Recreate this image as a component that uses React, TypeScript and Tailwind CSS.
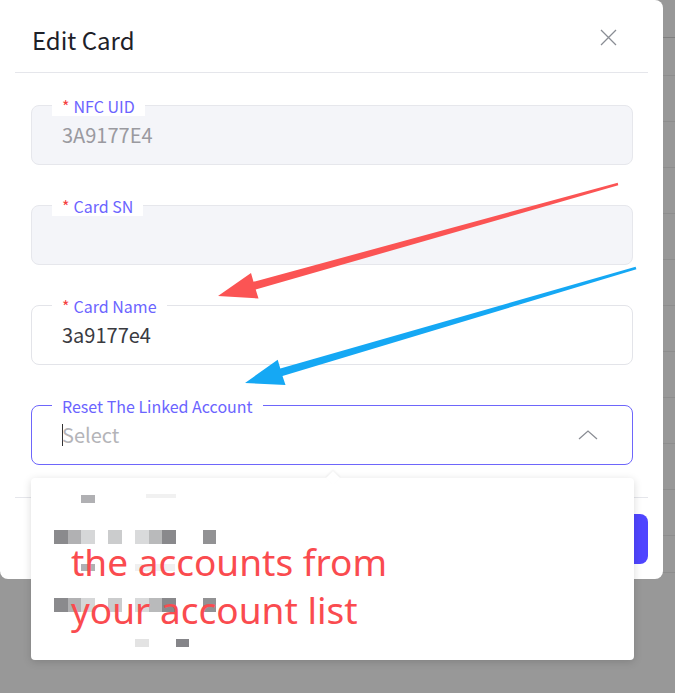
import React from 'react';

const font = { fontFamily: '"Noto Sans CJK SC", "Noto Sans", sans-serif' };

interface FieldProps {
    label: string;
    required?: boolean;
    value?: string;
    placeholder?: string;
    disabled?: boolean;
    active?: boolean;
}

const Field: React.FC<FieldProps> = ({ label, required, value, placeholder, disabled, active }) => {
    const box = disabled
        ? 'bg-[#f4f5f9] border-[#e6e7ec]'
        : active
            ? 'bg-white border-[#6e66fb]'
            : 'bg-white border-[#e3e4e9]';
    return (
        <div className={`relative h-[60px] rounded-lg border ${box} flex items-center pl-[30px] pr-[34px]`}>
            <span className="absolute -top-[10px] left-[20px] bg-white px-[10px] text-[16px] leading-[20px] text-[#6b64ff]">
                {required && <span className="text-[#f53f3f] mr-[4px]">*</span>}
                {label}
            </span>
            {value !== undefined && (
                <span className={`text-[20px] leading-[26px] ${disabled ? 'text-[#9a9aa0]' : 'text-[#3a3a3f]'}`}>{value}</span>
            )}
            {placeholder && (
                <div className="flex-1 flex items-center justify-between">
                    <span className="flex items-center text-[20px] leading-[26px] text-[#b4b4b8]">
                        <span className="w-px h-[22px] bg-[#333] -mr-px" />
                        {placeholder}
                    </span>
                    <svg width="20" height="12" viewBox="0 0 20 12" fill="none" stroke="#8a8d94" strokeWidth="1.3">
                        <path d="M1 10L10 2L19 10" />
                    </svg>
                </div>
            )}
        </div>
    );
};

const rows = [38, 38, 46, 46, 46, 46, 46, 46, 46, 46, 46, 46, 37];

const blocks: { x: number; y: number; w: number; h: number; c: string }[] = [
    { x: 50, y: 17, w: 14, h: 8, c: '#b0b0b3' },
    { x: 115, y: 16, w: 30, h: 4, c: '#f1f1f1' },
    { x: 23, y: 52, w: 14, h: 14, c: '#8a8a8d' },
    { x: 37, y: 52, w: 13, h: 14, c: '#b1b1b3' },
    { x: 50, y: 52, w: 14, h: 14, c: '#d6d7d8' },
    { x: 77, y: 52, w: 14, h: 14, c: '#cbcccd' },
    { x: 104, y: 52, w: 14, h: 14, c: '#d9dadb' },
    { x: 118, y: 52, w: 13, h: 14, c: '#b9babb' },
    { x: 131, y: 52, w: 14, h: 14, c: '#89898c' },
    { x: 172, y: 52, w: 13, h: 14, c: '#929294' },
    { x: 50, y: 86, w: 14, h: 7, c: '#b0b0b3' },
    { x: 104, y: 86, w: 40, h: 7, c: '#f0f0f0' },
    { x: 23, y: 120, w: 14, h: 14, c: '#8a8a8d' },
    { x: 37, y: 120, w: 13, h: 14, c: '#b1b1b3' },
    { x: 50, y: 120, w: 14, h: 14, c: '#d6d7d8' },
    { x: 77, y: 120, w: 14, h: 14, c: '#cbcccd' },
    { x: 104, y: 120, w: 14, h: 14, c: '#d9dadb' },
    { x: 118, y: 120, w: 13, h: 14, c: '#b9babb' },
    { x: 131, y: 120, w: 14, h: 14, c: '#89898c' },
    { x: 172, y: 120, w: 13, h: 14, c: '#929294' },
    { x: 104, y: 161, w: 14, h: 8, c: '#e3e3e3' },
    { x: 145, y: 161, w: 13, h: 8, c: '#858589' },
];

export default function App() {
    return (
        <div className="relative w-[675px] h-[693px] overflow-hidden bg-[#989898]" style={font}>
            {/* page behind the overlay */}
            <div className="flex flex-col">
                {rows.map((h, i) => (
                    <div
                        key={i}
                        className={`border-b ${i === 0 ? 'border-[#7f7f7f]' : 'border-[#8d8d8d]'}`}
                        style={{ height: h }}
                    />
                ))}
            </div>

            {/* modal */}
            <div className="absolute left-0 top-0 w-[663px] h-[579px] bg-white rounded-tr-lg rounded-b-lg flex flex-col">
                <div className="h-[72px] flex items-center justify-between pl-[32px] pr-[46px]">
                    <h2 className="text-[24px] leading-[30px] text-[#1d2129] font-normal mt-[8px]">Edit Card</h2>
                    <svg width="17" height="17" viewBox="0 0 17 17" stroke="#8a8d94" strokeWidth="1.3" className="mt-[2px]">
                        <path d="M1 1L16 16M16 1L1 16" />
                    </svg>
                </div>
                <div className="mx-[15px] border-b border-[#e5e6eb]" />

                <div className="flex flex-col gap-[40px] pl-[31px] pr-[30px] pt-[32px]">
                    <Field label="NFC UID" required value="3A9177E4" disabled />
                    <Field label="Card SN" required value="" disabled />
                    <Field label="Card Name" required value="3a9177e4" />
                    <Field label="Reset The Linked Account" placeholder="Select" active />
                </div>

                <div className="mx-[15px] mt-[32px] border-b border-[#e5e6eb]" />
                <div className="flex justify-end gap-3 pr-[15px] pt-[16px]">
                    <button className="h-[50px] px-8 rounded-lg border border-[#dcdde2] text-[16px] text-[#333]">Cancel</button>
                    <button className="h-[50px] px-8 rounded-lg bg-[#4f45ff] text-[16px] text-white">Save</button>
                </div>
            </div>

            {/* select dropdown */}
            <div className="absolute left-[31px] top-[478px] w-[603px] h-[182px] bg-white rounded shadow-[0_2px_8px_rgba(0,0,0,0.15)]">
                <div className="absolute -top-[5px] left-[297px] w-[10px] h-[10px] rotate-45 bg-white shadow-[-1px_-1px_2px_rgba(0,0,0,0.06)]" />
                {blocks.map((b, i) => (
                    <div
                        key={i}
                        className="absolute"
                        style={{ left: b.x, top: b.y, width: b.w, height: b.h, background: b.c }}
                    />
                ))}
                <div
                    className="absolute left-[40px] top-[60px] text-[37px] leading-[48px] text-[#fa4b4f]"
                    style={{ fontFamily: '"Noto Sans", sans-serif' }}
                >
                    <div>the accounts from</div>
                    <div>your account list</div>
                </div>
            </div>

            {/* annotation arrows */}
            <svg className="absolute inset-0 pointer-events-none" width="675" height="693" viewBox="0 0 675 693">
                <polygon
                    fill="#fb5454"
                    points="618.3,185.2 617.7,182.8 253.5,281.8 251,273 218,296 258.5,298.5 255.7,289.6"
                />
                <polygon
                    fill="#15a8f4"
                    points="636.4,269.2 635.6,266.8 280.3,368.5 277.7,359.8 245,383 285.5,385 282.5,376.1"
                />
            </svg>
        </div>
    );
}
